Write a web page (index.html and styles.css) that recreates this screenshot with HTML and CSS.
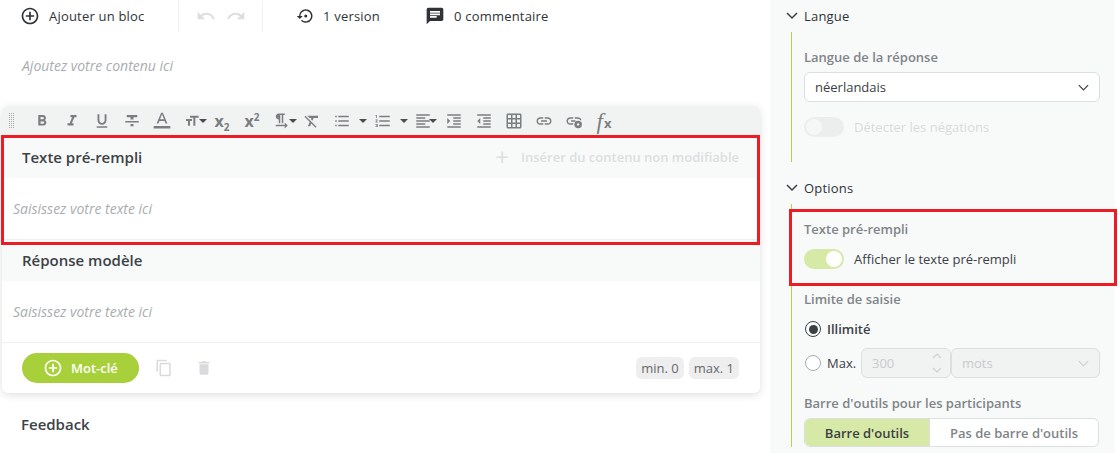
FILE: index.html
```html
<!DOCTYPE html>
<html lang="fr">
<head>
<meta charset="utf-8">
<title>Éditeur</title>
<link rel="stylesheet" href="styles.css">
</head>
<body>
<div class="page">
  <main class="main">
    <div class="topbar">
      <div class="tool add"><svg class="ico20" viewBox="0 0 24 24"><path d="M13 7h-2v4H7v2h4v4h2v-4h4v-2h-4V7zm-1-5C6.48 2 2 6.48 2 12s4.48 10 10 10 10-4.48 10-10S17.52 2 12 2zm0 18c-4.41 0-8-3.59-8-8s3.59-8 8-8 8 3.59 8 8-3.59 8-8 8z"/></svg><span>Ajouter un bloc</span></div>
      <div class="history">
        <svg class="ico20 dim" viewBox="0 0 24 24"><path d="M12.5 8c-2.65 0-5.05.99-6.9 2.6L2 7v9h9l-3.62-3.62c1.39-1.16 3.16-1.88 5.12-1.88 3.54 0 6.55 2.31 7.6 5.5l2.37-.78C21.08 11.03 17.15 8 12.5 8z"/></svg>
        <svg class="ico20 dim" viewBox="0 0 24 24"><path d="M18.4 10.6C16.55 8.99 14.15 8 11.5 8c-4.65 0-8.58 3.03-9.96 7.22L3.9 16c1.05-3.19 4.05-5.5 7.6-5.5 1.95 0 3.73.72 5.12 1.88L13 16h9V7l-3.6 3.6z"/></svg>
      </div>
      <div class="tool version"><svg class="ico18" viewBox="0 0 24 24"><path d="M13 3a9 9 0 0 0-9 9H1l4 4 4-4H6c0-3.87 3.13-7 7-7s7 3.13 7 7-3.13 7-7 7c-1.93 0-3.68-.79-4.94-2.06l-1.42 1.42A9 9 0 1 0 13 3z"/><circle cx="13" cy="12" r="2"/></svg><span>1 version</span></div>
      <div class="tool comment"><svg class="ico20" viewBox="0 0 24 24"><path d="M20 2H4c-1.1 0-2 .9-2 2v18l4-4h14c1.1 0 2-.9 2-2V4c0-1.1-.9-2-2-2zM6 9h12v2H6V9zm8 5H6v-2h8v2zm4-6H6V6h12v2z"/></svg><span>0 commentaire</span></div>
    </div>
    <p class="placeholder intro">Ajoutez votre contenu ici</p>

    <section class="card">
      <div class="toolbar">
        <svg class="grip" width="6" height="16" viewBox="0 0 6 16"><path d="M0 0h1v1H0zM2 0h1v1H2zM4 0h1v1H4zM0 2h1v1H0zM2 2h1v1H2zM4 2h1v1H4zM0 4h1v1H0zM2 4h1v1H2zM4 4h1v1H4zM0 6h1v1H0zM2 6h1v1H2zM4 6h1v1H4zM0 8h1v1H0zM2 8h1v1H2zM4 8h1v1H4zM0 10h1v1H0zM2 10h1v1H2zM4 10h1v1H4zM0 12h1v1H0zM2 12h1v1H2zM4 12h1v1H4zM0 14h1v1H0zM2 14h1v1H2zM4 14h1v1H4z"/></svg>
        <div class="tb"><svg viewBox="0 0 24 24"><path d="M15.6 10.79c.97-.67 1.65-1.77 1.65-2.79 0-2.26-1.75-4-4-4H7v14h7.04c2.09 0 3.71-1.7 3.71-3.79 0-1.52-.86-2.82-2.15-3.42zM10 6.5h3c.83 0 1.5.67 1.5 1.5s-.67 1.5-1.5 1.5h-3v-3zm3.5 9H10v-3h3.5c.83 0 1.5.67 1.5 1.5s-.67 1.5-1.5 1.5z"/></svg></div>
        <div class="tb"><svg viewBox="0 0 24 24"><path d="M10 4v3h2.21l-3.42 8H6v3h8v-3h-2.21l3.42-8H18V4z"/></svg></div>
        <div class="tb"><svg viewBox="0 0 24 24"><path d="M12 17c3.31 0 6-2.69 6-6V3h-2.5v8c0 1.93-1.57 3.5-3.5 3.5S8.5 12.93 8.5 11V3H6v8c0 3.31 2.69 6 6 6zm-7 2v2h14v-2H5z"/></svg></div>
        <div class="tb"><svg viewBox="0 0 24 24"><path d="M10 19h4v-3h-4v3zM5 4v3h5v3h4V7h5V4H5zM3 14h18v-2H3v2z"/></svg></div>
        <div class="tb"><svg class="big" viewBox="0 0 24 24"><path d="M11 2 5.5 15h2.25l1.12-3h6.25l1.12 3h2.25L13 2h-2zm-1.38 8L12 4l2.38 6H9.62zM2 18h20v3H2z"/></svg></div>
        <div class="tb caret-after size"><svg viewBox="0 0 24 24"><path d="M9 4v3h5v12h3V7h5V4H9zm-6 8h3v7h3v-7h3V9H3v3z"/></svg><i class="caret"></i></div>
        <div class="tb txt"><span>x<sub>2</sub></span></div>
        <div class="tb txt"><span>x<sup>2</sup></span></div>
        <div class="tb caret-after para"><svg viewBox="0 0 24 24"><path d="M9 10v5h2V4h2v11h2V4h2V2H9C6.79 2 5 3.79 5 6s1.79 4 4 4zm12 8l-4-4v3H5v2h12v3l4-4z"/></svg><i class="caret"></i></div>
        <div class="tb"><svg viewBox="0 0 24 24"><path d="M3.27 5L2 6.27l6.97 6.97L6.5 19h3l1.57-3.66L16.73 21 18 19.73 3.55 5.27 3.27 5zM6 5v.18L8.82 8h2.4l-.72 1.68 2.1 2.1L14.21 8H20V5H6z"/></svg></div>
        <div class="tb wide"><svg viewBox="0 0 24 24"><path d="M3 5h2v2H3zM3 11h2v2H3zM3 17h2v2H3zM7 5h14v2H7zM7 11h14v2H7zM7 17h14v2H7z"/></svg><i class="caret"></i></div>
        <div class="tb wide"><svg viewBox="0 0 24 24"><path d="M2 17h2v.5H3v1h1v.5H2v1h3v-4H2v1zm1-9h1V4H2v1h1v3zm-1 3h1.8L2 13.1v.9h3v-1H3.2L5 10.9V10H2v1zm5-6v2h14V5H7zm0 14h14v-2H7v2zm0-6h14v-2H7v2z"/></svg><i class="caret"></i></div>
        <div class="tb caret-after align"><svg viewBox="0 0 24 24"><path d="M15 15H3v2h12v-2zm0-8H3v2h12V7zM3 13h18v-2H3v2zm0 8h18v-2H3v2zM3 3v2h18V3H3z"/></svg><i class="caret"></i></div>
        <div class="tb"><svg viewBox="0 0 24 24"><path d="M3 21h18v-2H3v2zM3 8v8l4-4-4-4zm8 9h10v-2H11v2zM3 3v2h18V3H3zm8 6h10V7H11v2zm0 4h10v-2H11v2z"/></svg></div>
        <div class="tb"><svg viewBox="0 0 24 24"><path d="M11 17h10v-2H11v2zm-8-5l4 4V8l-4 4zm0 9h18v-2H3v2zM3 3v2h18V3H3zm8 6h10V7H11v2zm0 4h10v-2H11v2z"/></svg></div>
        <div class="tb"><svg viewBox="0 0 24 24"><path d="M20 2H4c-1.1 0-2 .9-2 2v16c0 1.1.9 2 2 2h16c1.1 0 2-.9 2-2V4c0-1.1-.9-2-2-2zM8 20H4v-4h4v4zm0-6H4v-4h4v4zm0-6H4V4h4v4zm6 12h-4v-4h4v4zm0-6h-4v-4h4v4zm0-6h-4V4h4v4zm6 12h-4v-4h4v4zm0-6h-4v-4h4v4zm0-6h-4V4h4v4z"/></svg></div>
        <div class="tb"><svg viewBox="0 0 24 24"><path d="M3.9 12c0-1.71 1.39-3.1 3.1-3.1h4V7H7c-2.76 0-5 2.24-5 5s2.24 5 5 5h4v-1.9H7c-1.71 0-3.1-1.39-3.1-3.1zM8 13h8v-2H8v2zm9-6h-4v1.9h4c1.71 0 3.1 1.39 3.1 3.1s-1.39 3.1-3.1 3.1h-4V17h4c2.76 0 5-2.24 5-5s-2.24-5-5-5z"/></svg></div>
        <div class="tb"><svg viewBox="0 0 24 24"><path d="M3.9 12c0-1.71 1.39-3.1 3.1-3.1h4V7H7c-2.76 0-5 2.24-5 5s2.24 5 5 5h4v-1.9H7c-1.71 0-3.1-1.39-3.1-3.1zM8 13h6v-2H8v2zm5-6v1.9h4c1.71 0 3.1 1.39 3.1 2.1h1.9c0-2.2-2.24-4-5-4h-4z"/><circle cx="17.5" cy="16.5" r="5"/><circle cx="17.5" cy="16.5" r="1.6" fill="#f1f3f3"/></svg></div>
        <div class="tb fx"><em>f</em><span>x</span></div>
      </div>

      <div class="field">
        <div class="field-head">
          <h2 class="field-title">Texte pré-rempli</h2>
          <div class="insert"><span class="insert-plus">+</span>Insérer du contenu non modifiable</div>
        </div>
        <div class="field-body"><p class="placeholder">Saisissez votre texte ici</p></div>
      </div>
      <div class="field">
        <div class="field-head second"><h2 class="field-title">Réponse modèle</h2></div>
        <div class="field-body second"><p class="placeholder">Saisissez votre texte ici</p></div>
      </div>

      <div class="card-foot">
        <button class="keyword" type="button"><svg class="ico20" viewBox="0 0 24 24"><path d="M13 7h-2v4H7v2h4v4h2v-4h4v-2h-4V7zm-1-5C6.48 2 2 6.48 2 12s4.48 10 10 10 10-4.48 10-10S17.52 2 12 2zm0 18c-4.41 0-8-3.59-8-8s3.59-8 8-8 8 3.59 8 8-3.59 8-8 8z"/></svg>Mot-clé</button>
        <svg class="foot-ico copy" viewBox="0 0 24 24"><path d="M16 1H4c-1.1 0-2 .9-2 2v14h2V3h12V1zm3 4H8c-1.1 0-2 .9-2 2v14c0 1.1.9 2 2 2h11c1.1 0 2-.9 2-2V7c0-1.1-.9-2-2-2zm0 16H8V7h11v14z"/></svg>
        <svg class="foot-ico trash" viewBox="0 0 24 24"><path d="M6 19c0 1.1.9 2 2 2h8c1.1 0 2-.9 2-2V7H6v12zM19 4h-3.5l-1-1h-5l-1 1H5v2h14V4z"/></svg>
        <div class="badges"><span class="badge">min. 0</span><span class="badge">max. 1</span></div>
      </div>
    </section>

    <h2 class="feedback">Feedback</h2>
  </main>

  <aside class="side">
    <div class="sec-head"><svg class="chev" viewBox="0 0 14 14"><path d="M2 4l5 5 5-5"/></svg>Langue</div>
    <div class="sec-body lang">
      <div class="label">Langue de la réponse</div>
      <div class="select"><span>néerlandais</span><svg class="chev small" viewBox="0 0 14 14"><path d="M2 4.5l5 5 5-5"/></svg></div>
      <div class="switch-row disabled">
        <span class="switch"><i></i></span><span>Détecter les négations</span>
      </div>
    </div>

    <div class="sec-head next"><svg class="chev" viewBox="0 0 14 14"><path d="M2 4l5 5 5-5"/></svg>Options</div>
    <div class="sec-body opts">
      <div class="label">Texte pré-rempli</div>
      <div class="switch-row on">
        <span class="switch"><i></i></span><span>Afficher le texte pré-rempli</span>
      </div>
      <div class="label limit">Limite de saisie</div>
      <div class="radio-row first"><span class="radio checked"></span><strong>Illimité</strong></div>
      <div class="radio-row max">
        <span class="radio"></span><span class="max-label">Max.</span>
        <div class="num"><span>300</span><svg width="12" height="24" viewBox="0 0 12 24"><path d="M2 7l4-4 4 4M2 17l4 4 4-4"/></svg></div>
        <div class="unit"><span>mots</span><svg class="chev small" viewBox="0 0 14 14"><path d="M2 4.5l5 5 5-5"/></svg></div>
      </div>
      <div class="label bar">Barre d'outils pour les participants</div>
      <div class="segment"><span class="seg active">Barre d'outils</span><span class="seg">Pas de barre d'outils</span></div>
    </div>
  </aside>

  <div class="mark mark-left"></div>
  <div class="mark mark-right"></div>
</div>
</body>
</html>
```
FILE: styles.css
```css
* { box-sizing: border-box; }
html, body { margin: 0; padding: 0; height: 453px; overflow: hidden; background: #fff; }
body { font-family: "Open Sans", "Liberation Sans", sans-serif; font-size: 13px; color: #2f3337; }
p, h2 { margin: 0; }

.page { position: relative; display: flex; width: 1118px; height: 453px; }
.main { width: 770px; flex: none; padding-left: 2px; }

.topbar { position: relative; display: flex; align-items: center; height: 32px; color: #2f3337; letter-spacing: .2px; }
.tool { display: flex; align-items: center; }
.ico20 { width: 20px; height: 20px; fill: currentColor; flex: none; }
.ico18 { width: 18px; height: 18px; fill: currentColor; flex: none; }
.add { margin-left: 18px; gap: 9px; width: 158px; }
.history { display: flex; gap: 10px; align-items: center; height: 31px; width: 85px; padding-left: 17px; border-left: 1px solid #eef0f0; border-right: 1px solid #eef0f0; }
.dim { color: #dcdedf; fill: #dcdedf; }
.version { margin-left: 33px; gap: 9px; width: 129px; }
.comment { gap: 9px; margin-left: 0; }

.placeholder { font-size: 14px; line-height: 20px; font-style: italic; color: #aaadaf; }
.intro { margin: 24px 0 0 20px; }

.card { width: 758px; height: 287px; margin-top: 30px; border-radius: 6px; background: #fff; box-shadow: 0 2px 8px rgba(0, 0, 0, .13); }
.toolbar { position: relative; display: flex; align-items: center; height: 30px; padding-left: 25px; background: #f1f3f3; border-radius: 6px 6px 0 0; }
.grip { position: absolute; left: 7px; top: 7px; fill: #a3a6a8; }
.tb { width: 30px; height: 30px; flex: none; display: flex; align-items: center; justify-content: center; color: #7b7e80; }
.tb svg { width: 18px; height: 18px; fill: currentColor; }
.tb svg.big { width: 20px; height: 20px; }
.caret { display: block; width: 0; height: 0; flex: none; border: 4px solid transparent; border-top: 4px solid #4a4d50; border-bottom: 0; }
.wide { width: 41px; justify-content: flex-start; padding-left: 6px; }
.wide .caret { margin-left: 8px; }
.caret-after { justify-content: flex-start; }
.size { padding-left: 7px; }
.size svg { width: 16px; height: 16px; }
.size .caret { margin-left: -1px; }
.para { padding-left: 5px; }
.tb.para svg { width: 20px; height: 20px; }
.para .caret { margin-left: -1px; }
.align { padding-left: 5px; }
.align .caret { margin-left: -3px; }
.txt { font-size: 16px; font-weight: 700; line-height: 1; }
.txt sub, .txt sup { font-size: 10px; line-height: 0; }
.fx { font-family: "Liberation Serif", serif; font-size: 23px; line-height: 1; }
.fx em { font-style: italic; }
.fx span { font-family: "Open Sans", sans-serif; font-size: 13px; font-weight: 700; margin: 5px 0 0 1px; }

.field-head { display: flex; align-items: center; justify-content: space-between; height: 42px; padding: 0 21px 0 20px; background: #f8fafa; }
.field-head.second { height: 41px; padding-bottom: 2px; }
.field-title { font-size: 15px; line-height: 20px; font-weight: 600; color: #3d4246; }
.insert { display: flex; align-items: center; font-size: 13px; font-weight: 600; color: #dcdedf; }
.insert-plus { font-size: 24px; font-weight: 400; line-height: 20px; margin-right: 12px; }
.field-body { height: 62px; padding: 21px 0 0 11px; border-bottom: 1px solid #eef0f0; }
.card-foot { display: flex; align-items: center; height: 50px; padding: 0 21px 0 20px; }
.keyword { display: flex; align-items: center; gap: 8px; height: 30px; width: 117px; padding: 0 0 0 21px; border: 0; border-radius: 15px; background: #a8d03a; color: #fff; font: 600 13px "Open Sans", sans-serif; }
.foot-ico { width: 18px; height: 18px; fill: #d8dadb; flex: none; }
.copy { margin-left: 16px; }
.trash { margin-left: 22px; }
.badges { display: flex; gap: 5px; margin-left: auto; }
.badge { height: 22px; line-height: 22px; padding: 0 5px; border-radius: 6px; background: #eeeeee; color: #666a6d; font-size: 13px; }
.feedback { margin: 21px 0 0 19px; font-size: 15px; line-height: 20px; font-weight: 600; color: #3d4246; }

.side { width: 345px; flex: none; height: 453px; padding: 0 15px; background: #f8fafa; }
.sec-head { display: flex; align-items: center; gap: 5px; height: 32px; font-size: 13px; font-weight: 500; letter-spacing: .2px; color: #2f3337; }
.sec-head.next { margin-top: 10px; }
.chev { width: 14px; height: 14px; fill: none; stroke: #3b4045; stroke-width: 1.5; flex: none; }
.chev.small { width: 13px; height: 13px; stroke-width: 1.3; }
.sec-body { margin-left: 6px; padding-left: 12px; border-left: 1px solid #b5d14f; }
.lang { height: 130px; padding-top: 16px; }
.opts { height: 243px; padding-top: 16px; }
.label { font-size: 13px; line-height: 18px; font-weight: 600; color: #7f8488; }
.select { display: flex; align-items: center; justify-content: space-between; height: 30px; margin-top: 6px; padding: 0 9px 0 10px; border: 1px solid #dcdfe0; border-radius: 6px; background: #fff; color: #3b4045; }
.switch-row { display: flex; align-items: center; gap: 10px; height: 20px; color: #3b4045; }
.lang .switch-row { margin-top: 15px; }
.opts .switch-row { margin-top: 11px; }
.switch { position: relative; display: block; width: 40px; height: 20px; border-radius: 10px; background: #eceeee; flex: none; }
.switch i { position: absolute; top: 2px; left: 2px; width: 16px; height: 16px; border-radius: 50%; background: #f5f6f6; }
.disabled { color: #d8dadb; }
.on .switch { background: #d7e9a6; }
.on .switch i { left: auto; right: 2px; background: #fff; }
.limit { margin-top: 21px; }
.radio-row { display: flex; align-items: center; color: #3b4045; }
.first { margin-top: 11px; height: 20px; }
.first strong { font-weight: 600; }
.max { margin-top: 9px; height: 30px; }
.radio { display: block; position: relative; width: 16px; height: 16px; margin: 0 6px 0 1px; border: 1.5px solid #a9adaf; border-radius: 50%; background: #fff; flex: none; }
.checked { border-color: #3b4045; }
.checked::after { content: ""; position: absolute; inset: 2.5px; border-radius: 50%; background: #3b4045; }
.max-label { width: 34px; flex: none; }
.num, .unit { display: flex; align-items: center; justify-content: space-between; height: 30px; border: 1px solid #dcdfe0; border-radius: 6px; background: #f1f2f2; color: #c9cbcd; }
.num { width: 90px; padding: 0 7px 0 10px; }
.num svg { fill: none; stroke: #cfd2d3; stroke-width: 1.2; }
.unit { width: 149px; padding: 0 9px 0 10px; }
.unit .chev { stroke: #cfd2d3; }
.bar { margin-top: 16px; }
.segment { display: flex; height: 29px; margin-top: 6px; width: 295px; border: 1px solid #dcdfe0; border-radius: 6px; overflow: hidden; background: #fff; }
.seg { display: flex; align-items: center; justify-content: center; flex: 1; font-weight: 600; color: #7f8488; }
.seg.active { flex: none; width: 125px; background: #d7e9a6; color: #3b4045; border-right: 1px solid #dcdfe0; }

.mark { position: absolute; border: 3px solid #ed1c24; pointer-events: none; }
.mark-left { left: 1px; top: 135px; width: 759px; height: 110px; }
.mark-right { left: 789px; top: 209px; width: 328px; height: 77px; }
```
